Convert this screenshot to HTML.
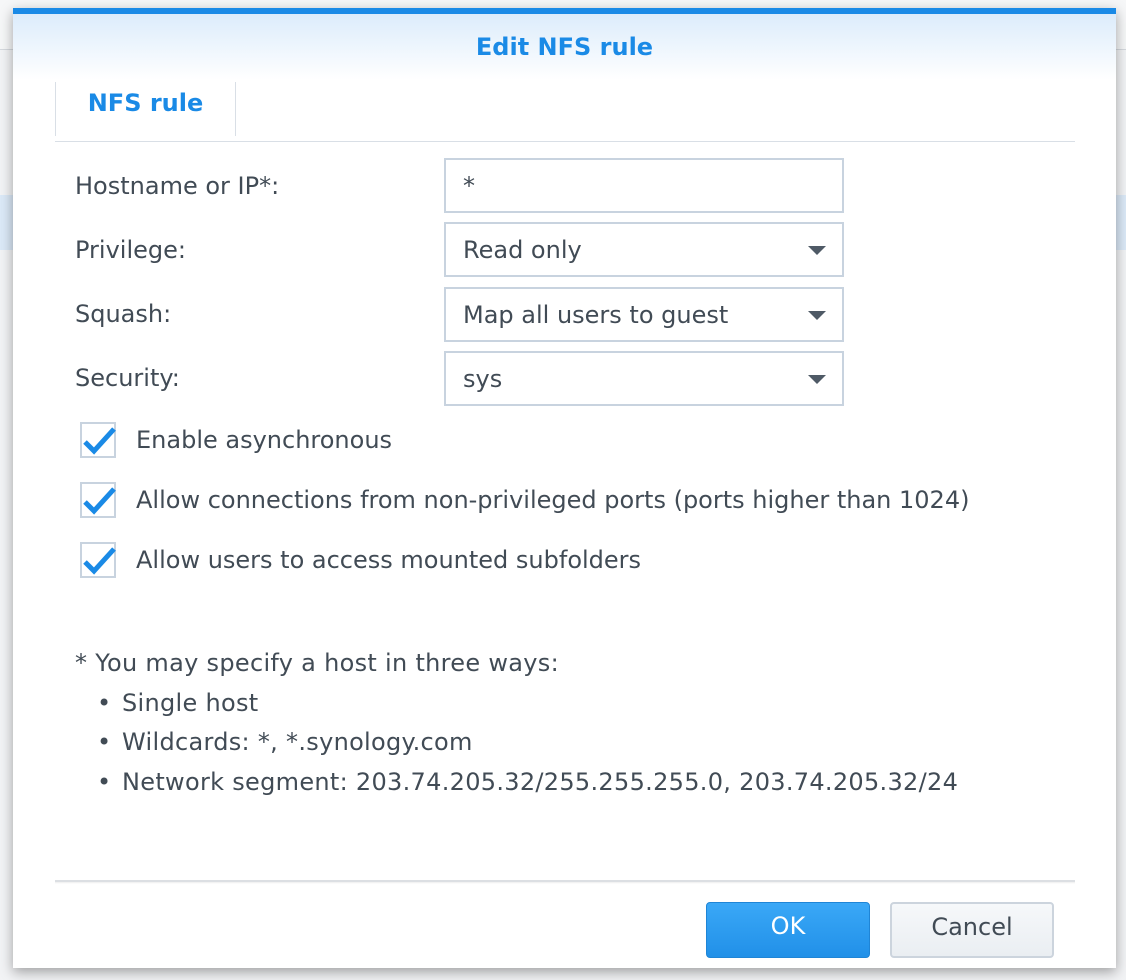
<!DOCTYPE html>
<html><head><meta charset="utf-8"><style>
*{box-sizing:border-box;margin:0;padding:0}
body{width:1126px;height:980px;background:#f2f3f5;font-family:"DejaVu Sans","Liberation Sans",sans-serif;color:#414b55;position:relative;overflow:hidden}
.bghead{position:absolute;left:0;top:0;width:1126px;height:50px;background:#f6f7f8;border-bottom:1px solid #d5d9de}
.bgrow{position:absolute;left:0;top:195px;width:1126px;height:55px;background:#dbe9f7}
.dlg{position:absolute;left:13px;top:8px;width:1103px;height:960px;background:#fff;border-top:6px solid #1a8ae6;box-shadow:0 4px 12px rgba(0,0,0,.35)}
.title{height:66px;background:linear-gradient(#dcecfb,#fff);text-align:center;font-weight:bold;color:#1a8ae6;font-size:24px;line-height:66px}
.tab{position:absolute;left:42px;top:68px;width:181px;height:54px;border-left:1px solid #d9dfe6;border-right:1px solid #d9dfe6;text-align:center;font-weight:bold;color:#1a8ae6;font-size:24px;line-height:42px}
.tabline{position:absolute;left:42px;top:127px;width:1020px;height:1px;background:#d9dfe6}
.lbl{position:absolute;left:62px;font-size:24px}
.inp{position:absolute;left:431px;width:400px;height:55px;border:2px solid #c8d3df;font-size:24px;padding-left:17px;line-height:52px}
.arr{position:absolute;right:16px;top:22px;width:0;height:0;border-left:9px solid transparent;border-right:9px solid transparent;border-top:9px solid #4f5a66}
.cb{position:absolute;left:67px;width:36px;height:36px;border:2px solid #c8d3df}
.cbt{position:absolute;left:123px;font-size:24px}
.note{position:absolute;left:62px;font-size:24px;letter-spacing:0.3px}
.bul{position:absolute;left:84px;font-size:24px}
.foot{position:absolute;left:42px;top:866px;width:1020px;height:4px;border-top:2px solid #dcdfe3;background:linear-gradient(#eee,#fff)}
.btn{position:absolute;top:888px;width:164px;height:56px;border-radius:4px;font-size:24px;text-align:center;line-height:46px}
</style></head><body>
<div class="bghead"></div><div class="bgrow"></div>
<div class="dlg">
<div class="title">Edit NFS rule</div>
<div class="tab">NFS rule</div>
<div class="tabline"></div>
<div class="lbl" style="top:158px">Hostname or IP*:</div>
<div class="lbl" style="top:222px">Privilege:</div>
<div class="lbl" style="top:286px">Squash:</div>
<div class="lbl" style="top:350px">Security:</div>
<div class="inp" style="top:144px">*</div>
<div class="inp" style="top:208px">Read only<div class="arr"></div></div>
<div class="inp" style="top:273px">Map all users to guest<div class="arr"></div></div>
<div class="inp" style="top:337px">sys<div class="arr"></div></div>
<div class="cb" style="top:408px"></div><svg style="position:absolute;left:68px;top:410px" width="40" height="34"><path d="M4 18 L13 27 L33 5" stroke="#1a8ae6" stroke-width="5" fill="none"/></svg>
<div class="cbt" style="top:412px">Enable asynchronous</div>
<div class="cb" style="top:468px"></div><svg style="position:absolute;left:68px;top:470px" width="40" height="34"><path d="M4 18 L13 27 L33 5" stroke="#1a8ae6" stroke-width="5" fill="none"/></svg>
<div class="cbt" style="top:472px">Allow connections from non-privileged ports (ports higher than 1024)</div>
<div class="cb" style="top:528px"></div><svg style="position:absolute;left:68px;top:530px" width="40" height="34"><path d="M4 18 L13 27 L33 5" stroke="#1a8ae6" stroke-width="5" fill="none"/></svg>
<div class="cbt" style="top:532px">Allow users to access mounted subfolders</div>
<div class="note" style="top:635px">* You may specify a host in three ways:</div>
<div class="bul" style="top:675px">•</div><div class="note" style="top:675px;left:109px">Single host</div>
<div class="bul" style="top:714px">•</div><div class="note" style="top:714px;left:109px">Wildcards: *, *.synology.com</div>
<div class="bul" style="top:754px">•</div><div class="note" style="top:754px;left:109px">Network segment: 203.74.205.32/255.255.255.0, 203.74.205.32/24</div>
<div class="foot"></div>
<div class="btn" style="left:693px;background:linear-gradient(#3aa8f7,#2190e8);border:1px solid #1f85d6;color:#fff">OK</div>
<div class="btn" style="left:877px;background:linear-gradient(#f6f8fa,#eaeef2);border:2px solid #ccd4dd;color:#414b55">Cancel</div>
</div>
</body></html>
